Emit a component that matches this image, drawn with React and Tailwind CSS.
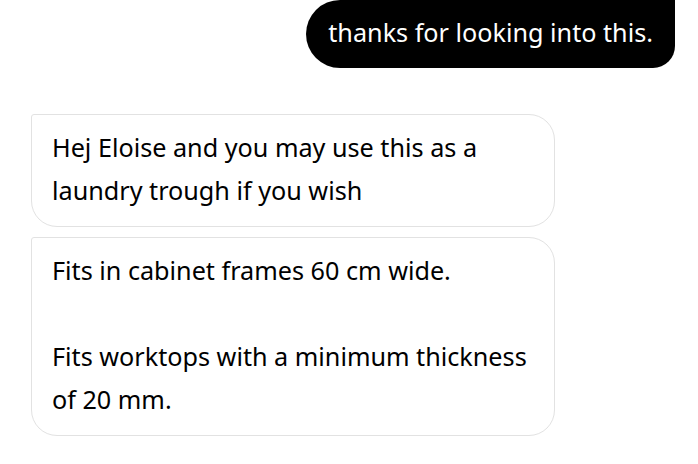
export default function App() {
  return (
    <div
      className="min-h-[464px] w-[698px] bg-white text-[25.2px] leading-[43px] text-black"
      style={{ fontFamily: '"Noto Sans", "Open Sans", sans-serif' }}
    >
      {/* mensaje enviado */}
      <div className="flex justify-end pr-[23px]">
        <div className="rounded-l-[34px] rounded-br-[22px] bg-black px-[22px] pt-[10.5px] pb-[14.5px] text-white">
          thanks for looking into this.
        </div>
      </div>

      {/* respuestas */}
      <div className="mt-[46px] flex flex-col gap-[10px] pl-[31px]">
        <div className="w-[524px] rounded-tl-[3px] rounded-tr-[26px] rounded-b-[26px] border border-[#e2e2e2] px-5 pt-[11px] pb-[14px]">
          Hej Eloise and you may use this as a laundry trough if you wish
        </div>
        <div className="w-[524px] rounded-tl-[3px] rounded-tr-[26px] rounded-b-[26px] border border-[#e2e2e2] px-5 pt-[11px] pb-[14px]">
          <p>Fits in cabinet frames 60 cm wide.</p>
          <p>&nbsp;</p>
          <p>Fits worktops with a minimum thickness of 20 mm.</p>
        </div>
      </div>
    </div>
  );
}
